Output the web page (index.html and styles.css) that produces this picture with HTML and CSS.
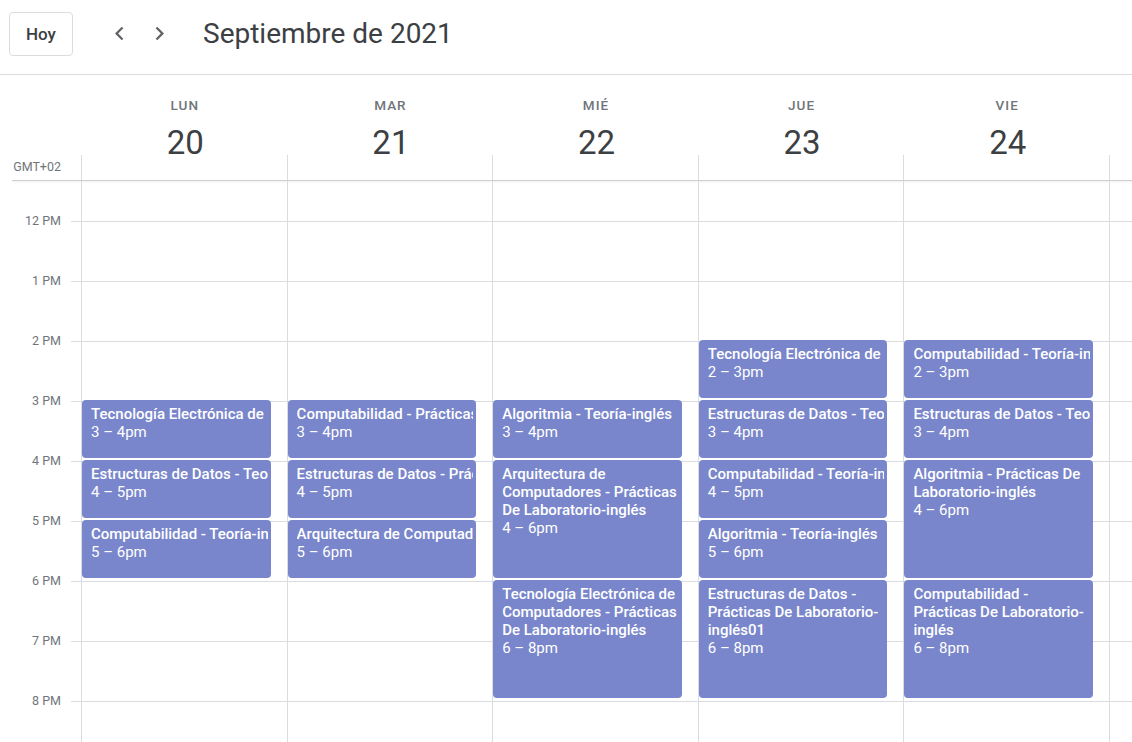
FILE: index.html
```html
<!DOCTYPE html>
<html lang="es">
<head>
<meta charset="utf-8">
<title>Calendario</title>
<link rel="stylesheet" href="styles.css">
</head>
<body>
<div class="app">
  <header class="topbar">
    <button class="today">Hoy</button>
    <button class="nav" aria-label="Anterior">
      <svg viewBox="0 0 24 24" width="27" height="27"><path d="M15.41 7.41L14 6l-6 6 6 6 1.41-1.41L10.83 12z"/></svg>
    </button>
    <button class="nav" aria-label="Siguiente">
      <svg viewBox="0 0 24 24" width="27" height="27"><path d="M10 6L8.59 7.41 13.17 12l-4.58 4.59L10 18l6-6z"/></svg>
    </button>
    <h1 class="title">Septiembre de 2021</h1>
  </header>

  <div class="dayhead">
    <div class="tz">GMT+02</div>
    <div class="dh"><div class="dname">LUN</div><div class="dnum">20</div></div>
    <div class="dh"><div class="dname">MAR</div><div class="dnum">21</div></div>
    <div class="dh"><div class="dname">MIÉ</div><div class="dnum">22</div></div>
    <div class="dh"><div class="dname">JUE</div><div class="dnum">23</div></div>
    <div class="dh"><div class="dname">VIE</div><div class="dnum">24</div></div>
    <div class="dh extra"></div>
  </div>
  <div class="divider"></div>

  <div class="grid">
    <div class="gutter">
      <div class="hl">12 PM</div>
      <div class="hl">1 PM</div>
      <div class="hl">2 PM</div>
      <div class="hl">3 PM</div>
      <div class="hl">4 PM</div>
      <div class="hl">5 PM</div>
      <div class="hl">6 PM</div>
      <div class="hl">7 PM</div>
      <div class="hl">8 PM</div>
    </div>

    <div class="col">
      <div class="ev at3 len1"><div class="et">Tecnología Electrónica de Computadores - Teoría-inglés</div><div class="tm">3 – 4pm</div></div>
      <div class="ev at4 len1"><div class="et">Estructuras de Datos - Teoría-inglés</div><div class="tm">4 – 5pm</div></div>
      <div class="ev at5 len1"><div class="et">Computabilidad - Teoría-inglés</div><div class="tm">5 – 6pm</div></div>
    </div>

    <div class="col">
      <div class="ev at3 len1"><div class="et">Computabilidad - Prácticas De Laboratorio-inglés</div><div class="tm">3 – 4pm</div></div>
      <div class="ev at4 len1"><div class="et">Estructuras de Datos - Prácticas De Laboratorio-inglés</div><div class="tm">4 – 5pm</div></div>
      <div class="ev at5 len1"><div class="et">Arquitectura de Computadores - Teoría-inglés</div><div class="tm">5 – 6pm</div></div>
    </div>

    <div class="col">
      <div class="ev at3 len1"><div class="et">Algoritmia - Teoría-inglés</div><div class="tm">3 – 4pm</div></div>
      <div class="ev at4 len2"><div class="et">Arquitectura de Computadores - Prácticas De Laboratorio-inglés</div><div class="tm">4 – 6pm</div></div>
      <div class="ev at6 len2"><div class="et">Tecnología Electrónica de Computadores - Prácticas De Laboratorio-inglés</div><div class="tm">6 – 8pm</div></div>
    </div>

    <div class="col">
      <div class="ev at2 len1"><div class="et">Tecnología Electrónica de Computadores - Teoría-inglés</div><div class="tm">2 – 3pm</div></div>
      <div class="ev at3 len1"><div class="et">Estructuras de Datos - Teoría-inglés</div><div class="tm">3 – 4pm</div></div>
      <div class="ev at4 len1"><div class="et">Computabilidad - Teoría-inglés</div><div class="tm">4 – 5pm</div></div>
      <div class="ev at5 len1"><div class="et">Algoritmia - Teoría-inglés</div><div class="tm">5 – 6pm</div></div>
      <div class="ev at6 len2"><div class="et">Estructuras de Datos - Prácticas De Laboratorio-inglés01</div><div class="tm">6 – 8pm</div></div>
    </div>

    <div class="col">
      <div class="ev at2 len1"><div class="et">Computabilidad - Teoría-inglés</div><div class="tm">2 – 3pm</div></div>
      <div class="ev at3 len1"><div class="et">Estructuras de Datos - Teoría-inglés</div><div class="tm">3 – 4pm</div></div>
      <div class="ev at4 len2"><div class="et">Algoritmia - Prácticas De Laboratorio-inglés</div><div class="tm">4 – 6pm</div></div>
      <div class="ev at6 len2"><div class="et">Computabilidad - Prácticas De Laboratorio-inglés</div><div class="tm">6 – 8pm</div></div>
    </div>

    <div class="col extra"></div>
  </div>
</div>
</body>
</html>
```

FILE: styles.css
```css
* { box-sizing: border-box; }
html, body { margin: 0; padding: 0; background: #fff; }
body {
  font-family: Roboto, "Liberation Sans", Arial, sans-serif;
  color: #3c4043;
  width: 1132px;
  height: 742px;
  overflow: hidden;
}

.app { display: flex; flex-direction: column; height: 742px; }

/* top bar */
.topbar {
  height: 75px;
  flex: 0 0 75px;
  display: flex;
  align-items: center;
  padding: 0 0 7px 9px;
  border-bottom: 1px solid #dadce0;
}
.today {
  width: 64px;
  height: 44px;
  border: 1px solid #dadce0;
  border-radius: 4px;
  background: #fff;
  color: #3c4043;
  font-family: Roboto, "Liberation Sans", Arial, sans-serif;
  font-size: 17px;
  font-weight: 500;
  padding: 0;
  margin-right: 26px;
}
.nav {
  width: 40px;
  height: 40px;
  border: 0;
  background: transparent;
  padding: 0;
  display: flex;
  align-items: center;
  justify-content: center;
}
.nav svg { fill: #5f6368; display: block; }
.title {
  margin: 0 0 0 24px;
  font-size: 28px;
  font-weight: 400;
  color: #3c4043;
  line-height: 36px;
}

/* day header */
.dayhead {
  display: grid;
  grid-template-columns: 81px repeat(5, 1fr) 23px;
  height: 105px;
  flex: 0 0 105px;
}
.tz {
  display: flex;
  align-items: flex-end;
  justify-content: flex-end;
  padding: 0 20px 5px 0;
  font-size: 12.5px;
  line-height: 16px;
  color: #70757a;
}
.dh {
  text-align: center;
  padding-top: 22px;
  background: linear-gradient(#dadce0, #dadce0) left bottom / 1px 25px no-repeat;
}
.dname {
  font-size: 13.5px;
  line-height: 16px;
  font-weight: 500;
  letter-spacing: 1px;
  padding-left: 2px;
  color: #70757a;
}
.dnum {
  margin-top: 12px;
  font-size: 33px;
  line-height: 36px;
  padding-left: 3px;
  color: #3c4043;
}
.divider {
  height: 1px;
  flex: 0 0 1px;
  margin-left: 12px;
  background: #d0d1d3;
  box-shadow: 0 1px 2px rgba(60, 64, 67, 0.12);
}

/* grid body */
.grid {
  flex: 1 1 auto;
  display: grid;
  grid-template-columns: 81px repeat(5, 1fr) 23px;
  overflow: hidden;
  background-image: repeating-linear-gradient(to bottom, #dadce0 0, #dadce0 1px, transparent 1px, transparent 60px);
  background-position: 71px 40px;
  background-size: calc(100% - 71px) 100%;
  background-repeat: no-repeat;
}
.gutter {
  padding-top: 32px;
  display: flex;
  flex-direction: column;
}
.hl {
  flex: 0 0 60px;
  height: 60px;
  text-align: right;
  padding-right: 20px;
  font-size: 12.5px;
  line-height: 16px;
  color: #70757a;
}
.col {
  border-left: 1px solid #dadce0;
  display: grid;
  grid-template-rows: 39px repeat(10, 60px);
  align-content: start;
  min-width: 0;
}

/* events */
.ev {
  background: #7986cb;
  border-radius: 4px;
  margin: 0 16px 2px 0;
  padding: 5px 3px 0 9px;
  color: #fff;
  font-size: 15px;
  line-height: 18px;
  overflow: hidden;
  min-width: 0;
}
.et { font-weight: 500; }
.len1 .et { white-space: nowrap; overflow: hidden; }
.tm { font-weight: 400; white-space: nowrap; }

.at2 { grid-row-start: 4; }
.at3 { grid-row-start: 5; }
.at4 { grid-row-start: 6; }
.at5 { grid-row-start: 7; }
.at6 { grid-row-start: 8; }
.len1 { grid-row-end: span 1; }
.len2 { grid-row-end: span 2; }
```
